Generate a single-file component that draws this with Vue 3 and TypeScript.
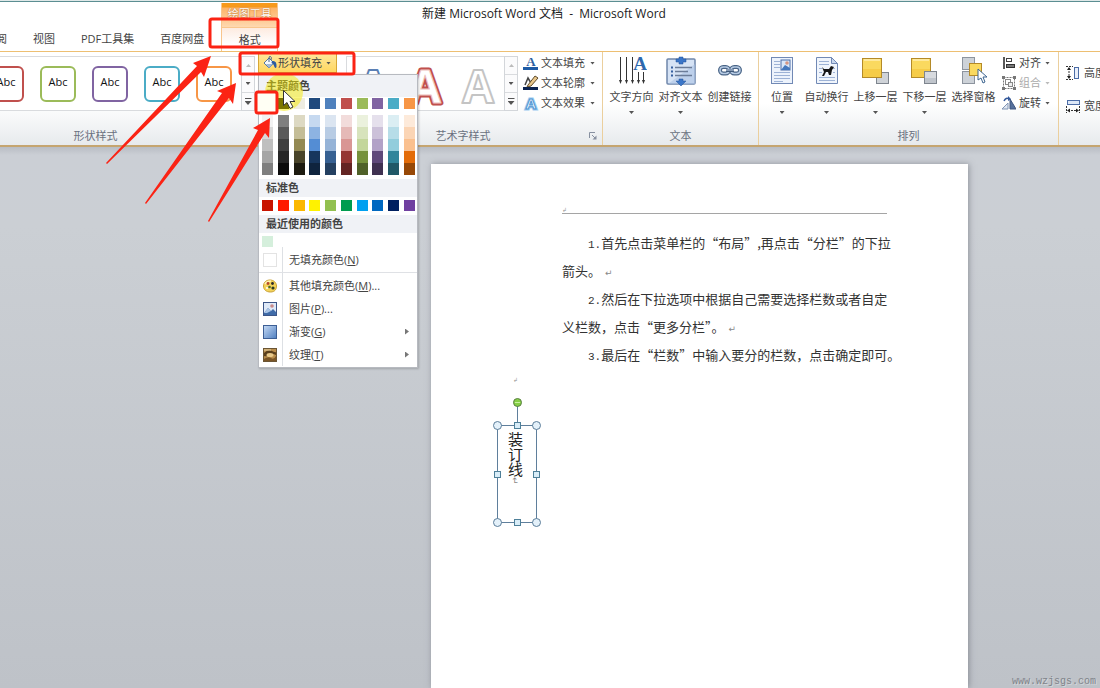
<script setup lang="ts">
import { ref } from 'vue'

const tabs: string[] = ['审阅', '视图', 'PDF工具集', '百度网盘']
const shapeStyles: string[] = ['#c0504d', '#9bbb59', '#8064a2', '#4bacc6', '#f79646']
const shapeMenuOpen = ref(true)

const themeRow: string[] = ['#ffffff', '#000000', '#eeece1', '#1f497d', '#4f81bd', '#c0504d', '#9bbb59', '#8064a2', '#4bacc6', '#f79646']
const themeShades: string[][] = [
  ['#f2f2f2', '#d8d8d8', '#bfbfbf', '#a5a5a5', '#7f7f7f'],
  ['#7f7f7f', '#595959', '#3f3f3f', '#262626', '#0c0c0c'],
  ['#ddd9c3', '#c4bd97', '#938953', '#494429', '#1d1b10'],
  ['#c6d9f0', '#8db3e2', '#548dd4', '#17365d', '#0f243e'],
  ['#dbe5f1', '#b8cce4', '#95b3d7', '#366092', '#244061'],
  ['#f2dcdb', '#e5b9b7', '#d99694', '#953734', '#632423'],
  ['#ebf1dd', '#d7e3bc', '#c3d69b', '#76923c', '#4f6128'],
  ['#e5e0ec', '#ccc1d9', '#b2a2c7', '#5f497a', '#3f3151'],
  ['#dbeef3', '#b7dde8', '#92cddc', '#31859b', '#205867'],
  ['#fdeada', '#fbd5b5', '#fac08f', '#e36c09', '#974806'],
]
const standardRow: string[] = ['#c81400', '#ff1a00', '#fbb800', '#fff200', '#92c050', '#009c50', '#00a0f0', '#0068c0', '#002060', '#7040a0']

interface MenuItem { icon: string; label: string; key: string; tail: string; sub: boolean }
const menuItems: MenuItem[] = [
  { icon: 'palette', label: '其他填充颜色', key: 'M', tail: '...', sub: false },
  { icon: 'picture', label: '图片', key: 'P', tail: '...', sub: false },
  { icon: 'gradient', label: '渐变', key: 'G', tail: '', sub: true },
  { icon: 'texture', label: '纹理', key: 'T', tail: '', sub: true },
]
</script>

<template>
  <div class="app">
    <header class="titlebar">
      <h1>新建 Microsoft Word 文档&nbsp; -&nbsp; Microsoft Word</h1>
      <nav class="tabs">
        <button v-for="t in tabs" :key="t" class="tab">{{ t }}</button>
        <div class="context">
          <span class="context-title">绘图工具</span>
          <button class="tab active">格式</button>
        </div>
      </nav>
    </header>

    <section class="ribbon">
      <div class="group shape-group">
        <div class="body">
          <div class="gallery">
            <button v-for="c in shapeStyles" :key="c" class="shape" :style="{ borderColor: c }">Abc</button>
          </div>
          <div class="scroller">
            <button aria-label="上一行" disabled><i class="tri up"></i></button>
            <button aria-label="下一行"><i class="tri"></i></button>
            <button aria-label="其他形状样式"><i class="tri more"></i></button>
          </div>
          <div class="fill-col">
            <button class="fill-btn" @click="shapeMenuOpen = !shapeMenuOpen">
              <svg width="16" height="16" viewBox="0 0 16 16">
                <path d="M2 8 7 3l5 5-5 5z" fill="#f4f8fc" stroke="#55779c" />
                <path d="M4 9h7l-4 4z" fill="#9fb8d6" />
                <path d="M7 7V3q0-2 1.500-1.500T9 5" fill="none" stroke="#47688f" />
                <path d="M10 6q5-1 4.500 6-1 2-2 0-.5-3-3-4z" fill="#2c5ba0" />
              </svg>
              <span>形状填充</span><i class="tri"></i>
            </button>

            <div v-if="shapeMenuOpen" class="menu">
              <h2 class="first">主题颜色</h2>
              <div class="swatches">
                <button v-for="c in themeRow" :key="c" class="sw" :aria-label="c" :style="{ background: c }"></button>
              </div>
              <div class="swatches shades">
                <div v-for="(col, i) in themeShades" :key="i" class="shade-col">
                  <button v-for="c in col" :key="c" :aria-label="c" :style="{ background: c }"></button>
                </div>
              </div>
              <h2>标准色</h2>
              <div class="swatches">
                <button v-for="c in standardRow" :key="c" class="sw" :aria-label="c" :style="{ background: c }"></button>
              </div>
              <h2>最近使用的颜色</h2>
              <div class="swatches"><button class="sw recent" aria-label="最近使用"></button></div>
              <div class="items">
                <button class="item none">
                  <span class="ico"><i class="empty"></i></span>
                  <span>无填充颜色(<u>N</u>)</span>
                </button>
                <button v-for="m in menuItems" :key="m.key" class="item">
                  <span class="ico">
                    <svg v-if="m.icon === 'palette'" width="14" height="14" viewBox="0 0 14 14">
                      <path d="M7 1C3 1 .5 3.500.5 7S3 13 7.500 13 13.500 10 13.500 7 11 1 7 1z" fill="#f3d35a" stroke="#c9a135" />
                      <path d="M2 5q2-3 6-3" stroke="#fff3b8" stroke-width="1.500" fill="none" />
                      <circle cx="5" cy="4.500" r="1.400" fill="#b5472c" /><circle cx="9.500" cy="4.500" r="1.400" fill="#2b2b2b" />
                      <circle cx="6.500" cy="8" r="1.300" fill="#4d6a2b" /><circle cx="10" cy="9" r="1.600" fill="#2d3b22" /><circle cx="4" cy="9" r="1" fill="#fff" />
                    </svg>
                    <svg v-else-if="m.icon === 'picture'" width="14" height="14" viewBox="0 0 14 14">
                      <rect x=".5" y=".5" width="13" height="13" fill="#dfe9f7" stroke="#3d5688" />
                      <path d="M1 11l4-5 3 3 2-2 3 3v3H1z" fill="#3f6ba8" /><path d="M1 11l4-5 3 3-4 2z" fill="#a9c4e6" />
                      <circle cx="9" cy="4" r="1.800" fill="#c98b8b" />
                    </svg>
                    <svg v-else-if="m.icon === 'gradient'" width="14" height="14" viewBox="0 0 14 14">
                      <defs><linearGradient id="gm" x1="0" y1="0" x2="1" y2="1"><stop offset="0" stop-color="#c7dbf5" /><stop offset="1" stop-color="#4f7fc0" /></linearGradient></defs>
                      <rect x=".5" y=".5" width="13" height="13" fill="url(#gm)" stroke="#3d5f95" />
                    </svg>
                    <svg v-else width="14" height="14" viewBox="0 0 14 14">
                      <rect x=".5" y=".5" width="13" height="13" fill="#b98d4c" stroke="#6b5534" />
                      <path d="M1 5q4-4 8-2t4 1v3q-4-2-6 0T1 8z" fill="#5a3f1c" /><ellipse cx="7" cy="7" rx="3.500" ry="2" fill="#e8c98a" />
                      <path d="M1 11q4-3 7-1t5-2v5H1z" fill="#7a5526" /><path d="M1 2h7" stroke="#e6d2a4" />
                    </svg>
                  </span>
                  <span>{{ m.label }}(<u>{{ m.key }}</u>){{ m.tail }}</span>
                  <i v-if="m.sub" class="sub"></i>
                </button>
              </div>
            </div>
          </div>
        </div>
        <div class="caption">形状样式</div>
      </div>

      <div class="group art-group">
        <div class="body">
          <div class="gallery art">
            <button aria-label="蓝色轮廓"><svg viewBox="0 0 52 53"><text x="26" y="46" fill="#fff" stroke="#5b7fb4" stroke-width="2">A</text></svg></button>
            <button aria-label="红色轮廓"><svg viewBox="0 0 52 53">
              <text x="26" y="46" fill="#fff" stroke="#c0504d" stroke-width="5">A</text>
              <text x="26" y="46" fill="#fff" stroke="#efc3c0" stroke-width="1">A</text>
            </svg></button>
            <button aria-label="灰色轮廓"><svg viewBox="0 0 52 53">
              <text x="26" y="46" fill="#fff" stroke="#c4c4c4" stroke-width="2">A</text>
            </svg></button>
          </div>
          <div class="scroller">
            <button aria-label="上一行" disabled><i class="tri up"></i></button>
            <button aria-label="下一行"><i class="tri"></i></button>
            <button aria-label="其他艺术字样式"><i class="tri more"></i></button>
          </div>
          <div class="stack art-stack">
            <button class="small">
              <svg width="16" height="16" viewBox="0 0 16 16"><text x="8" y="11" class="serif" fill="#2f5f9f">A</text><rect x="0" y="12" width="15" height="3" fill="#1f5ba5" /></svg>
              <span>文本填充</span><i class="tri"></i>
            </button>
            <button class="small">
              <svg width="16" height="16" viewBox="0 0 16 16"><path d="M2 10 5 3l3 5" fill="none" stroke="#444" stroke-width="1.500" /><path d="M5 10 12 1l3 2-7 8-4 1z" fill="#e9c78b" stroke="#5f4c2b" /><rect x="0" y="12" width="15" height="3" fill="#0b2350" /></svg>
              <span>文本轮廓</span><i class="tri"></i>
            </button>
            <button class="small">
              <svg width="16" height="16" viewBox="0 0 16 16"><text x="8" y="14" class="glow" fill="#fff" stroke="#9ccbf0" stroke-width="3">A</text><text x="8" y="14" class="glow" fill="#e9f5ff" stroke="#4f94d0" stroke-width="1">A</text></svg>
              <span>文本效果</span><i class="tri"></i>
            </button>
          </div>
        </div>
        <div class="caption">艺术字样式
          <button class="launcher" aria-label="艺术字样式设置"><svg width="8" height="8" viewBox="0 0 8 8"><path d="M.5 6V.5H6M3 3l3 3" fill="none" stroke="#8790a0" /><path d="M7.500 3.500v4h-4z" fill="#8790a0" /></svg></button>
        </div>
      </div>

      <div class="group text-group">
        <div class="body">
          <button class="big">
            <svg width="30" height="30" viewBox="0 0 30 30">
              <path d="M3.500 1v25M9.500 1v25M15.500 1v25M21.500 16v10M26.500 16v10" stroke="#333" />
              <path d="M2 24h3l-1.500 4zM8 24h3l-1.500 4zM14 24h3l-1.500 4zM20 24h3l-1.500 4zM25 24h3l-1.500 4z" fill="#333" />
              <text x="23" y="14" class="serif big-a" fill="#2e68ad">A</text>
            </svg>
            <span>文字方向</span><i class="tri"></i>
          </button>
          <button class="big">
            <svg width="32" height="30" viewBox="0 0 32 30">
              <rect x="2" y="3" width="28" height="25" rx="1" fill="#d6e3f5" stroke="#6f86aa" stroke-width="1.500" />
              <path d="M3 28 30 8v20z" fill="#abc3e4" opacity=".6" />
              <path d="M10 11.500h17M10 15.500h13M10 19.500h17" stroke="#6b7c98" stroke-width="1.500" />
              <path d="M6 11.500h2M6 15.500h2M6 19.500h2" stroke="#345f9f" stroke-width="2" />
              <path d="M14 1h4v2h3v3h-3v2h-4V6h-3V3h3zM16 30l5-5h-3v-2h-4v2h-3z" fill="#3b76c8" stroke="#235298" stroke-width=".5" />
            </svg>
            <span>对齐文本</span><i class="tri"></i>
          </button>
          <button class="big">
            <svg width="30" height="30" viewBox="0 0 30 30">
              <g fill="none" stroke="#4a6587" stroke-width="4"><rect x="5" y="11" width="9" height="6.500" rx="3.200" /><rect x="16" y="11" width="9" height="6.500" rx="3.200" /></g>
              <g fill="none" stroke="#b7cbe4" stroke-width="1.500"><rect x="5" y="11" width="9" height="6.500" rx="3.200" /><rect x="16" y="11" width="9" height="6.500" rx="3.200" /></g>
              <path d="M11 14.500h8" stroke="#40597a" stroke-width="3" /><path d="M11 14h8" stroke="#c9d9ee" />
            </svg>
            <span>创建链接</span>
          </button>
        </div>
        <div class="caption">文本</div>
      </div>

      <div class="group arrange-group">
        <div class="body">
          <button class="big narrow">
            <svg width="24" height="30" viewBox="0 0 24 30">
              <rect x="1.500" y="1.500" width="21" height="26" fill="#edf3fc" stroke="#7189b5" />
              <path d="M4 5.500h6M4 8.500h6M4 11.500h6M4 16.500h16M4 19.500h16M4 22.500h16M4 25.500h9" stroke="#9eb3d6" />
              <rect x="11" y="4" width="9" height="10" fill="#d9e7f8" stroke="#4c6ea7" /><path d="M11 14l4-5 5 3v2z" fill="#4478bd" /><circle cx="17" cy="7" r="1.800" fill="#d49684" />
            </svg>
            <span>位置</span><i class="tri"></i>
          </button>
          <button class="big">
            <svg width="24" height="30" viewBox="0 0 24 30">
              <path d="M1.500 1.500h15l6 6v20h-21z" fill="#f0f5fc" stroke="#7189b5" /><path d="M16.500 1.500v6h6z" fill="#c7d7ee" stroke="#7189b5" />
              <path d="M4 5.500h10M4 8.500h10M4 21.500h16M4 24.500h16M4 12.500h3M4 16.500h3M18 12.500h2M18 16.500h2" stroke="#9eb3d6" />
              <path d="M7 11l2 2h5l2-3 3 1-2 3-1 5h-2l-1-3h-2l-2 4H7l2-4z" fill="#161616" />
            </svg>
            <span>自动换行</span><i class="tri"></i>
          </button>
          <button class="big">
            <svg width="30" height="30" viewBox="0 0 30 30">
              <rect x="15.500" y="16.500" width="12" height="11" fill="#cfd3d8" stroke="#7e858e" />
              <rect x="1.500" y="2.500" width="19" height="19" fill="#fad95f" stroke="#b48a28" /><rect x="2" y="13" width="18" height="8" fill="#f6cc48" /><path d="M3 4h16" stroke="#ffe99b" stroke-width="2" />
            </svg>
            <span>上移一层</span><i class="tri"></i>
          </button>
          <button class="big">
            <svg width="30" height="30" viewBox="0 0 30 30">
              <rect x="1.500" y="2.500" width="19" height="19" fill="#fad95f" stroke="#b48a28" /><rect x="2" y="13" width="18" height="8" fill="#f6cc48" /><path d="M3 4h16" stroke="#ffe99b" stroke-width="2" />
              <rect x="14.500" y="15.500" width="12" height="12" fill="#d7dade" stroke="#7e858e" /><path d="M15 22h11v5H15z" fill="#c0c5cc" />
            </svg>
            <span>下移一层</span><i class="tri"></i>
          </button>
          <button class="big">
            <svg width="26" height="30" viewBox="0 0 26 30">
              <g fill="#cdd2d8" stroke="#8d949e"><rect x="1.500" y="1.500" width="12" height="12" /><rect x="1.500" y="15.500" width="12" height="12" /></g>
              <rect x="8.500" y="7.500" width="12" height="12" fill="#fad95f" stroke="#b48a28" />
              <path d="M17 13v11l3-2 2 5 2-1-2-5h4z" fill="#fff" stroke="#3d6590" />
            </svg>
            <span>选择窗格</span>
          </button>
          <div class="stack arrange-stack">
            <button class="small">
              <svg width="14" height="14" viewBox="0 0 14 14"><path d="M2 1v12" stroke="#222" stroke-width="1.500" /><rect x="4.500" y="2.500" width="5" height="3" fill="#fff" stroke="#444" /><rect x="4.500" y="8.500" width="8" height="3" fill="#777" stroke="#333" /></svg>
              <span>对齐</span><i class="tri"></i>
            </button>
            <button class="small" disabled>
              <svg width="14" height="14" viewBox="0 0 14 14"><rect x="1.500" y="1.500" width="11" height="11" fill="none" stroke="#777" stroke-dasharray="2 1" /><rect x="3.500" y="3.500" width="5" height="5" fill="#fff" stroke="#888" /><rect x="6.500" y="6.500" width="4" height="4" fill="#eee" stroke="#888" /><path d="M0 0h3v3H0zM11 0h3v3h-3zM0 11h3v3H0zM11 11h3v3h-3z" fill="#777" /></svg>
              <span>组合</span><i class="tri"></i>
            </button>
            <button class="small">
              <svg width="14" height="14" viewBox="0 0 14 14"><path d="M8 3v10h6z" fill="#55709c" stroke="#3e5680" /><path d="M6 7v6H0z" fill="#dfe7f2" stroke="#8094b4" /><path d="M2 5q2-4 5-2" fill="none" stroke="#33599b" stroke-width="1.500" /><path d="M6 0l3 3-3 2z" fill="#33599b" /></svg>
              <span>旋转</span><i class="tri"></i>
            </button>
          </div>
        </div>
        <div class="caption">排列</div>
      </div>

      <div class="group size-group">
        <div class="body">
          <div class="stack size-stack">
            <button class="small">
              <svg width="14" height="14" viewBox="0 0 14 14"><path d="M3 2v10M0 .5h7M0 13.500h7" stroke="#333" stroke-dasharray="2 1" /><path d="M3 1l2 3H1zM3 13l2-3H1z" fill="#222" /><rect x="8.500" y="1.500" width="4" height="11" fill="#e9effa" stroke="#4b6ca6" /></svg>
              <span>高度</span>
            </button>
            <button class="small">
              <svg width="14" height="14" viewBox="0 0 14 14"><rect x="1.500" y="1.500" width="12" height="4" fill="#dce7f7" stroke="#4b6ca6" /><path d="M.5 7v7M13.500 7v7M2 11.500h10" stroke="#333" stroke-dasharray="2 1" /><path d="M1 11.500l3-2v4zM13 11.500l-3-2v4z" fill="#222" /></svg>
              <span>宽度</span>
            </button>
          </div>
        </div>
      </div>
    </section>

    <main class="workspace">
      <article class="page">
        <div class="page-head"><span class="tick">↲</span></div>
        <p class="indent"><span class="num">1.</span>首先点击菜单栏的“布局”,再点击“分栏”的下拉</p>
        <p>箭头。<span class="ret">↵</span></p>
        <p class="indent"><span class="num">2.</span>然后在下拉选项中根据自己需要选择栏数或者自定</p>
        <p>义栏数，点击“更多分栏”。<span class="ret">↵</span></p>
        <p class="indent"><span class="num">3.</span>最后在“栏数”中输入要分的栏数，点击确定即可。</p>

        <div class="textbox">
          <svg width="52" height="132" viewBox="0 0 52 132">
            <g fill="none" stroke="#5f7f9c"><path d="M26.500 10v20" /><rect x="6.500" y="29.500" width="39" height="97" /></g>
            <circle cx="26.500" cy="6.500" r="4" fill="#86cf45" stroke="#5a7f45" /><path d="M24 6.500h5" stroke="#c8f0a0" />
            <g fill="#e4f1fa" stroke="#5b7d99"><circle cx="6.500" cy="29.500" r="4" /><circle cx="45.500" cy="29.500" r="4" /><circle cx="6.500" cy="126.500" r="4" /><circle cx="45.500" cy="126.500" r="4" /></g>
            <g fill="#d9edf8" stroke="#4f8099"><rect x="23.500" y="26.500" width="6" height="6" /><rect x="23.500" y="123.500" width="6" height="6" /><rect x="3.500" y="75.500" width="6" height="6" /><rect x="42.500" y="75.500" width="6" height="6" /></g>
          </svg>
          <span class="vertical">装订线<span class="ret">↵</span></span>
        </div>
        <span class="anchor">↲</span>
      </article>
      <span class="watermark">www.wzjsgs.com</span>
    </main>

    <svg class="marks" width="1100" height="688" viewBox="0 0 1100 688" aria-hidden="true">
      <circle cx="284" cy="92" r="19" fill="#f5ea00" opacity=".5" />
      <path d="M283.500 90.500v15l3.500-3 3 6 3-1.500-3-5.500h5z" fill="#fff" stroke="#333" />
      <rect x="257" y="93" width="19" height="19" fill="#fffff4" />
      <g fill="none" stroke="#fb2314" stroke-width="3">
        <rect x="210" y="19" width="68" height="28" rx="2" />
        <rect x="240" y="53" width="114" height="21" rx="2" />
        <rect x="256" y="92" width="21" height="21" rx="2" />
      </g>
      <g fill="#fb2314">
        <path d="M106 163 197 66 193 63 211 56 204 77 201 72 107 164z" />
        <path d="M145 203 222 93 217 91 236 83 233 104 229 98 146 204z" />
        <path d="M208 221 258 130 253 128 270 118 269 138 265 133 209 222z" />
      </g>
    </svg>
  </div>
</template>

<style>
body { margin: 0; }
</style>

<style scoped>
* { box-sizing: border-box; }
.app {
  position: relative; display: flex; flex-direction: column; height: 100vh; overflow: hidden;
  font: 11px/14px "Open Sans", "Noto Sans CJK SC", sans-serif; color: #444;
}
button { border: 0; padding: 0; margin: 0; background: none; font: inherit; color: inherit; }
svg { display: block; flex: none; }
.titlebar { flex: none; height: 51px; border-top: 1px solid #dfe8e8; background: linear-gradient(#5b8e92 0 1px, #fff 1px); display: grid; }
h1 { grid-area: 1 / 1; margin: 5px 12px 0 0; text-align: center; font-size: 12px; line-height: 16px; font-weight: 400; color: #222; }
.tabs { grid-area: 1 / 1; display: flex; align-items: flex-end; margin-left: -15px; }
.tab { height: 24px; margin-right: 26px; white-space: nowrap; }
.context { height: 48px; width: 57px; margin-left: -9px; display: flex; flex-direction: column; background: linear-gradient(#f79a1c 0 4px, #fdb469 5px, #fed9b0 24px); border: 1px solid #f8c58c; border-width: 0 1px; }
.context-title { flex: 1; text-align: center; line-height: 22px; color: #fff; text-shadow: 0 0 1px #b9702a, 0 0 2px #c98544; }
.tab.active { margin: 0; border-top: 1px solid #f9c68d; background: linear-gradient(#fdebe0, #fff 70%); }

.ribbon { flex: none; display: flex; height: 96px; overflow: visible; border-top: 1px solid #edbf72; border-bottom: 2px solid #c5a570; background: linear-gradient(#fff 55%, #e7eaed); position: relative; z-index: 2; }
.group { flex: none; display: flex; flex-direction: column; border-right: 1px solid #ebcf9d; }
.body { display: flex; height: 76px; }
.caption { text-align: center; color: #6a7180; height: 16px; line-height: 16px; position: relative; }
.shape-group { width: 501px; margin-left: -155px; border-right: 0; }
.shape-group .body { justify-content: flex-end; }
.gallery { margin-top: 4px; height: 55px; display: flex; align-items: center; justify-content: flex-end; gap: 16px; padding-right: 9px; border: 1px solid #d9dbde; border-width: 1px 0; background: #fff; width: 396px; }
.shape { flex: none; width: 36px; height: 36px; border: 2px solid; border-radius: 6px; background: #fff; color: #111; padding-bottom: 4px; }
.scroller { margin-top: 4px; width: 14px; height: 55px; display: flex; flex-direction: column; border: 1px solid #d3d6da; }
.scroller button { flex: 1; display: flex; align-items: center; justify-content: center; border-bottom: 1px solid #d9dbde; background: #fbfbfc; }
.scroller button:last-child { border: 0; }
.tri { display: block; flex: none; width: 5px; height: 3px; background: #555; clip-path: polygon(0 0, 100% 0, 50% 100%); }
.tri.up { transform: rotate(180deg); background: #bbb; }
.tri.more { width: 7px; height: 7px; clip-path: polygon(0 0, 100% 0, 100% 1px, 0 1px, 0 3px, 100% 3px, 50% 100%, 0 3px); }
.fill-col { width: 91px; padding: 1px 0 0 3px; position: relative; }
.fill-btn { display: flex; align-items: center; gap: 4px; width: 79px; height: 20px; padding-left: 3px; border: 1px solid #d7a735; background: linear-gradient(#ffe69a, #ffd760); white-space: nowrap; }
.fill-btn span { margin-left: -4px; }

.menu { position: absolute; left: 3px; top: 22px; width: 160px; background: #fff; border: 1px solid #b7bac0; box-shadow: 1px 1px 2px #0003; padding-bottom: 1px; }
.menu h2 { margin: 4px 0 3px; padding-left: 7px; height: 18px; line-height: 18px; font-size: 11px; font-weight: 700; background: #f0f2f6; color: #444; }
.menu h2.first { margin-top: 0; height: 22px; line-height: 22px; margin-bottom: 1px; }
.swatches { display: flex; justify-content: space-between; padding: 0 2px 0 3px; }
.sw { width: 11px; height: 11px; }
.recent { background: #d5efdc; }
.shades { margin-top: 6px; }
.shade-col { display: flex; flex-direction: column; width: 11px; }
.shade-col button { height: 12px; }
.items { background: linear-gradient(90deg, #fff 23px, #dde0e4 23px 24px, #fff 24px); }
.item { display: flex; align-items: center; width: 100%; height: 23px; text-align: left; }
.item.none { height: 26px; border-bottom: 1px solid #dfe1e5; margin-bottom: 1px; }
.ico { width: 30px; padding-left: 4px; flex: none; }
.empty { display: block; width: 14px; height: 14px; border: 1px solid #e3e3e3; background: #fff; }
.sub { margin-left: auto; margin-right: 8px; width: 4px; height: 6px; background: #777; clip-path: polygon(0 0, 100% 50%, 0 100%); }

.art-group { width: 257px; }
.gallery.art { width: 158px; gap: 0; padding: 0; border-left-width: 1px; }
.art button { flex: 1; }
.art svg { width: 100%; height: 53px; }
.art text { font: 700 46px "Open Sans", sans-serif; text-anchor: middle; stroke-linejoin: round; }
.serif { font: 700 13px "Liberation Serif", serif; text-anchor: middle; }
.serif.big-a { font-size: 19px; }
.glow { font: 700 15px "Open Sans", sans-serif; text-anchor: middle; }
.stack { display: flex; flex-direction: column; padding-top: 1px; }
.small { display: flex; align-items: center; gap: 3px; height: 20px; white-space: nowrap; }
.small .tri { margin-left: 1px; }
.small:disabled { color: #aaa; }
.small:disabled .tri { background: #bbb; }
.art-stack { margin-left: 5px; }
.art-stack .small { gap: 2px; }
.art-stack .tri { margin-left: 3px; }
.art-group .caption { padding-right: 22px; }
.launcher { position: absolute; right: 5px; top: 4px; }
.text-group { width: 156px; }
.text-group .body { padding-left: 4px; }
.arrange-group { width: 300px; }
.arrange-group .body { padding-left: 3px; }
.big { width: 49px; height: 66px; flex: none; display: flex; flex-direction: column; align-items: center; padding-top: 4px; white-space: nowrap; }
.big span { margin-top: 4px; }
.big .tri { margin-top: 7px; }
.big.narrow { width: 40px; }
.arrange-stack { margin-left: 4px; }
.size-group { flex: 1; min-width: 0; border: 0; overflow: hidden; }
.size-stack { padding: 11px 0 0 7px; gap: 13px; }
.size-stack .small { gap: 4px; }

.workspace { flex: 1; min-height: 0; display: flex; position: relative; overflow: hidden; background: linear-gradient(#b9bdc4, #cbcfd5 8px, #cbcfd4 80px, #bec2c8); }
.page { position: relative; width: 537px; margin: 17px 0 0 431px; padding: 34px 81px 0 131px; background: #fff; box-shadow: 1px 0 6px #5b606988; color: #333; }
.page-head { height: 16px; margin-bottom: 15px; border-bottom: 1px solid #a5a5a5; line-height: 24px; }
.page p { margin: 0; font: 13px/28px "Noto Sans CJK SC", sans-serif; white-space: nowrap; }
.page .indent { padding-left: 26px; }
.num { font: 11px "Liberation Mono", monospace; }
.ret { font: 9px "DejaVu Sans", sans-serif; color: #888; margin-left: 4px; }
.tick, .anchor { font: 6px "DejaVu Sans", sans-serif; color: #999; }
.page-head .tick { display: block; padding-top: 8px; }
.anchor { position: absolute; left: 82px; top: 212px; }
.textbox { position: absolute; left: 60px; top: 232px; }
.vertical { position: absolute; left: 15px; top: 36px; writing-mode: vertical-rl; font: 15px/18px "Noto Sans CJK SC", sans-serif; color: #222; }
.vertical .ret { margin: 0; }
.watermark { position: absolute; right: 4px; bottom: 0; font: 10px/12px "Liberation Mono", monospace; color: #80848a; text-shadow: 1px 1px 0 #d4d7da; }
.marks { position: absolute; left: 0; top: 0; z-index: 3; pointer-events: none; }
</style>
